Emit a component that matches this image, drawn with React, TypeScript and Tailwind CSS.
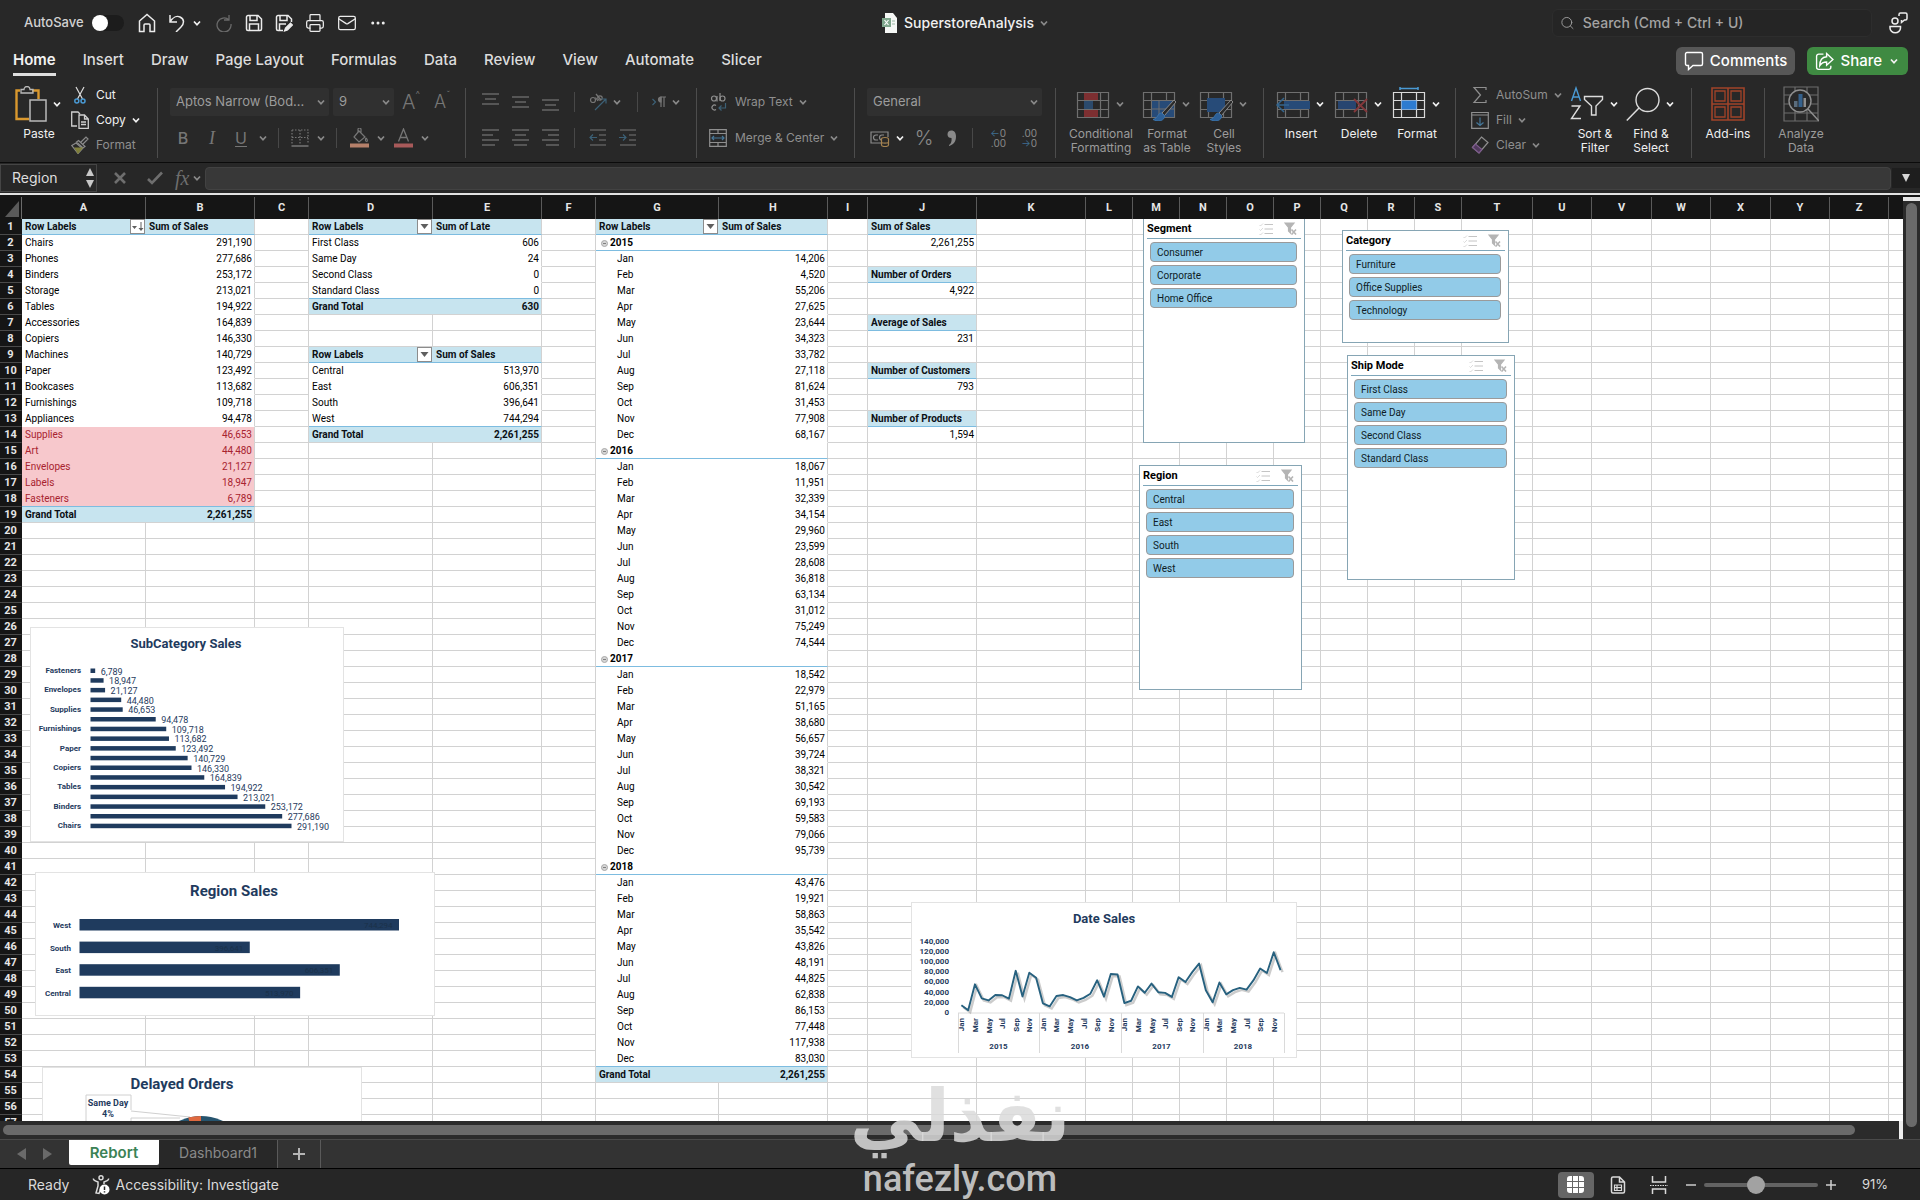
import { useState } from "react";
import type { ReactNode } from "react";
import { Home, Mail, MoreHorizontal, Printer, Search } from "lucide-react";

type CellKind = "text" | "num" | "head" | "total" | "totalNum" | "bad" | "badNum" | "year" | "month";

type Cell = {
  value: string;
  kind: CellKind;
  filter?: "arrow" | "sorted";
};

const columns = [
  { name: "A", width: "w-[124px]" },
  { name: "B", width: "w-[109px]" },
  { name: "C", width: "w-[54px]" },
  { name: "D", width: "w-[124px]" },
  { name: "E", width: "w-[109px]" },
  { name: "F", width: "w-[54px]" },
  { name: "G", width: "w-[123px]" },
  { name: "H", width: "w-[109px]" },
  { name: "I", width: "w-[40px]" },
  { name: "J", width: "w-[109px]" },
  { name: "K", width: "w-[109px]" },
  { name: "L", width: "w-[47px]" },
  { name: "M", width: "w-[47px]" },
  { name: "N", width: "w-[47px]" },
  { name: "O", width: "w-[47px]" },
  { name: "P", width: "w-[47px]" },
  { name: "Q", width: "w-[47px]" },
  { name: "R", width: "w-[47px]" },
  { name: "S", width: "w-[47px]" },
  { name: "T", width: "w-[71px]" },
  { name: "U", width: "w-[59px]" },
  { name: "V", width: "w-[60px]" },
  { name: "W", width: "w-[59px]" },
  { name: "X", width: "w-[60px]" },
  { name: "Y", width: "w-[59px]" },
  { name: "Z", width: "w-[59px]" },
  { name: "", width: "w-auto" },
];

const subCategories: [string, number][] = [
  ["Chairs", 291190],
  ["Phones", 277686],
  ["Binders", 253172],
  ["Storage", 213021],
  ["Tables", 194922],
  ["Accessories", 164839],
  ["Copiers", 146330],
  ["Machines", 140729],
  ["Paper", 123492],
  ["Bookcases", 113682],
  ["Furnishings", 109718],
  ["Appliances", 94478],
  ["Supplies", 46653],
  ["Art", 44480],
  ["Envelopes", 21127],
  ["Labels", 18947],
  ["Fasteners", 6789],
];

const lateOrders: [string, number][] = [
  ["First Class", 606],
  ["Same Day", 24],
  ["Second Class", 0],
  ["Standard Class", 0],
];

const regions: [string, number][] = [
  ["Central", 513970],
  ["East", 606351],
  ["South", 396641],
  ["West", 744294],
];

const months = ["Jan", "Feb", "Mar", "Apr", "May", "Jun", "Jul", "Aug", "Sep", "Oct", "Nov", "Dec"];

const years: { year: string; sales: number[] }[] = [
  { year: "2015", sales: [14206, 4520, 55206, 27625, 23644, 34323, 33782, 27118, 81624, 31453, 77908, 68167] },
  { year: "2016", sales: [18067, 11951, 32339, 34154, 29960, 23599, 28608, 36818, 63134, 31012, 75249, 74544] },
  { year: "2017", sales: [18542, 22979, 51165, 38680, 56657, 39724, 38321, 30542, 69193, 59583, 79066, 95739] },
  { year: "2018", sales: [43476, 19921, 58863, 35542, 43826, 48191, 44825, 62838, 86153, 77448, 117938, 83030] },
];

const measures: [string, number][] = [
  ["Sum of Sales", 2261255],
  ["Number of Orders", 4922],
  ["Average of Sales", 231],
  ["Number of Customers", 793],
  ["Number of Products", 1594],
];

const fmt = (n: number) => n.toLocaleString("en-US");

const cells: Record<string, Cell> = {};
const noRight = new Set<string>();
const noBottom = new Set<string>();
const blueBottom = new Set<string>();

function pivotArea(left: string, right: string, from: number, to: number) {
  for (let r = from; r <= to; r++) {
    noRight.add(left + r);
    if (r < to) {
      noBottom.add(left + r);
      noBottom.add(right + r);
    }
  }
  [from, to - 1].forEach((r) => {
    blueBottom.add(left + r);
    blueBottom.add(right + r);
  });
}

function pivot(
  left: string,
  right: string,
  start: number,
  valueTitle: string,
  rows: [string, number][],
  total: number,
  filter: "arrow" | "sorted",
  isBad: (n: number) => boolean = () => false
) {
  const end = start + rows.length + 1;
  cells[left + start] = { value: "Row Labels", kind: "head", filter };
  cells[right + start] = { value: valueTitle, kind: "head" };
  rows.forEach(([label, n], i) => {
    const bad = isBad(n);
    cells[left + (start + 1 + i)] = { value: label, kind: bad ? "bad" : "text" };
    cells[right + (start + 1 + i)] = { value: fmt(n), kind: bad ? "badNum" : "num" };
  });
  cells[left + end] = { value: "Grand Total", kind: "total" };
  cells[right + end] = { value: fmt(total), kind: "totalNum" };
  pivotArea(left, right, start, end);
}

pivot("A", "B", 1, "Sum of Sales", subCategories, 2261255, "sorted", (n) => n < 50000);
pivot("D", "E", 1, "Sum of Late", lateOrders, 630, "arrow");
pivot("D", "E", 9, "Sum of Sales", regions, 2261255, "arrow");

cells.G1 = { value: "Row Labels", kind: "head", filter: "arrow" };
cells.H1 = { value: "Sum of Sales", kind: "head" };
years.forEach(({ year, sales }, y) => {
  const top = 2 + y * 13;
  cells["G" + top] = { value: year, kind: "year" };
  blueBottom.add("G" + top);
  blueBottom.add("H" + top);
  sales.forEach((n, m) => {
    cells["G" + (top + 1 + m)] = { value: months[m], kind: "month" };
    cells["H" + (top + 1 + m)] = { value: fmt(n), kind: "num" };
  });
});
cells.G54 = { value: "Grand Total", kind: "total" };
cells.H54 = { value: "2,261,255", kind: "totalNum" };
pivotArea("G", "H", 1, 54);

measures.forEach(([label, n], i) => {
  cells["J" + (1 + i * 3)] = { value: label, kind: "head" };
  cells["J" + (2 + i * 3)] = { value: fmt(n), kind: "num" };
  blueBottom.add("J" + (1 + i * 3));
});

const kindClass: Record<CellKind, string> = {
  text: "bg-white text-black",
  num: "bg-white text-right text-black",
  head: "bg-[#c7e4ef] font-bold text-[#0b0f14]",
  total: "bg-[#c7e4ef] font-bold text-[#0b0f14]",
  totalNum: "bg-[#c7e4ef] text-right font-bold text-[#0b0f14]",
  bad: "bg-[#f7c8cc] text-[#a8232f]",
  badNum: "bg-[#f7c8cc] text-right text-[#a8232f]",
  year: "bg-white font-bold text-black",
  month: "bg-white pl-[21px] text-black",
};

/* ---------- small pieces ---------- */

function Chevron({ dim = false }: { dim?: boolean }) {
  return (
    <svg viewBox="0 0 12 12" className={`size-3 shrink-0 ${dim ? "text-[#8a8a8a]" : "text-[#f2f2f2]"}`}>
      <path d="M3 4.500 6 7.800 9 4.500" fill="none" stroke="currentColor" strokeWidth="1.700" />
    </svg>
  );
}

function Glyph({
  box = "0 0 18 18",
  size = "size-[18px]",
  children,
}: {
  box?: string;
  size?: string;
  children: ReactNode;
}) {
  return (
    <svg viewBox={box} className={`${size} shrink-0`} fill="none" stroke="currentColor" strokeWidth="1.200">
      {children}
    </svg>
  );
}

const GroupLine = () => <div className="mt-3 h-[70px] w-px shrink-0 bg-[#4d4d4d]" />;
const ShortLine = () => <div className="mx-0.5 h-5 w-px shrink-0 bg-[#484848]" />;

function SmallButton({
  icon,
  label,
  arrow = false,
  dim = false,
}: {
  icon: ReactNode;
  label: string;
  arrow?: boolean;
  dim?: boolean;
}) {
  return (
    <button className={`flex h-[25px] items-center text-xs ${dim ? "text-[#8f8f8f]" : "text-[#f0f0f0]"}`}>
      <span className="mr-[7px] flex w-[18px] justify-center">{icon}</span>
      {label}
      {arrow && (
        <span className="ml-1">
          <Chevron dim={dim} />
        </span>
      )}
    </button>
  );
}

function BigButton({
  icon,
  label,
  width,
  arrow = true,
  dim = false,
  dimArrow = false,
}: {
  icon: ReactNode;
  label: string;
  width: string;
  arrow?: boolean;
  dim?: boolean;
  dimArrow?: boolean;
}) {
  return (
    <button className={`flex ${width} shrink-0 flex-col items-center pt-[10px]`}>
      <span className="flex h-9 items-center gap-1">
        {icon}
        {arrow && <Chevron dim={dimArrow} />}
      </span>
      <span
        className={`mt-[5px] text-center text-xs leading-[14px] whitespace-pre ${
          dim ? "text-[#9b9b9b]" : "text-[#f0f0f0]"
        }`}
      >
        {label}
      </span>
    </button>
  );
}

function RibbonSelect({ label, value, width }: { label: string; value: string; width: string }) {
  return (
    <div className={`relative h-7 ${width} shrink-0 rounded-xs bg-[#303030]`}>
      <select
        aria-label={label}
        className="size-full appearance-none truncate bg-transparent pr-5 pl-1.5 text-[13px] text-[#9c9c9c] outline-none"
      >
        <option>{value}</option>
      </select>
      <span className="pointer-events-none absolute top-2 right-0.5">
        <Chevron dim />
      </span>
    </div>
  );
}

/* ---------- title bar ---------- */

function TitleBar() {
  const [autoSave, setAutoSave] = useState(false);
  return (
    <div className="flex h-[46px] shrink-0 items-center text-[#ececec]">
      <div className="flex flex-1 items-center pl-6">
        <label htmlFor="autosave" className="text-[13px] font-medium text-[#d2d2d2]">
          AutoSave
        </label>
        <span className="relative ml-2 flex h-4 w-8 items-center">
          <input
            id="autosave"
            type="checkbox"
            checked={autoSave}
            onChange={(e) => setAutoSave(e.target.checked)}
            className="peer h-4 w-8 appearance-none rounded-full bg-[#1c1c1c]"
          />
          <span className="pointer-events-none absolute left-0 size-4 rounded-full bg-white peer-checked:left-4" />
        </span>
        <div className="ml-3.5 flex items-center gap-3">
          <button aria-label="Home">
            <svg viewBox="0 0 18 20" className="h-5 w-[18px]" fill="none" stroke="currentColor" strokeWidth="1.500">
              <path d="M1.500 8 9 1.500 16.500 8v10.500H12V12a1 1 0 0 0-1-1H7a1 1 0 0 0-1 1v6.500H1.500z" />
            </svg>
          </button>
          <button aria-label="Undo" className="flex items-center gap-[5px]">
            <Glyph>
              <path d="M2 1v7h7M2 8c3-5 7-6.500 10-5 5 2.500 4 7 1 10l-5 5" strokeWidth="1.500" />
            </Glyph>
            <Chevron />
          </button>
          <button aria-label="Redo" className="text-[#6a6a6a]">
            <Glyph>
              <path d="M14 1v5H9M14 6A7 7 0 1 0 16 10" strokeWidth="1.300" />
            </Glyph>
          </button>
          <button aria-label="Save">
            <Glyph>
              <path d="M3 1.500h10l3.500 3.500v10a1.500 1.500 0 0 1-1.500 1.500H3A1.500 1.500 0 0 1 1.500 15V3A1.500 1.500 0 0 1 3 1.500Z" strokeWidth="1.500" />
              <path d="M5 2v4.500h7V2M4.500 16V10h9v6" strokeWidth="1.500" />
            </Glyph>
          </button>
          <button aria-label="Save as">
            <Glyph>
              <path d="M8 16.500H3A1.500 1.500 0 0 1 1.500 15V3A1.500 1.500 0 0 1 3 1.500h10l3.500 3.500v3" strokeWidth="1.500" />
              <path d="M5 2v4.500h7V2M4.500 16V10H11" strokeWidth="1.500" />
              <path d="m9.500 17 1-3 5-5 2 2-5 5z" fill="currentColor" />
            </Glyph>
          </button>
          <button aria-label="Print">
            <Printer className="size-5" strokeWidth={1.5} />
          </button>
          <button aria-label="Mail">
            <Mail className="size-5" strokeWidth={1.5} />
          </button>
          <button aria-label="More">
            <MoreHorizontal className="size-[18px]" strokeWidth={2} />
          </button>
        </div>
      </div>
      <div className="flex items-center text-sm font-medium text-[#f0f0f0]">
        <svg viewBox="0 0 16 20" className="mr-1.5 h-5 w-4">
          <path d="M3 0h8l4 5v15H3z" fill="#f6f8f6" />
          <rect x="0" y="5" width="9" height="9" fill="#7fa78d" />
          <path d="m2.500 7 4 5m0-5-4 5" stroke="#fff" strokeWidth="1.200" />
          <path d="M10 8h3M10 11h3" stroke="#9ab8a4" />
        </svg>
        SuperstoreAnalysis
        <span className="ml-1">
          <Chevron dim />
        </span>
      </div>
      <div className="flex flex-1 items-center justify-end pr-3">
        <div className="flex h-7 w-80 items-center rounded-md border border-[#2d2d2d] bg-[#252525] pl-[7px]">
          <Search className="size-4 text-[#a0a0a0]" strokeWidth={1.5} />
          <input
            aria-label="Search"
            placeholder="Search (Cmd + Ctrl + U)"
            className="ml-2 w-full bg-transparent text-sm font-medium outline-none placeholder:text-[#a3a3a3]"
          />
        </div>
        <button aria-label="Presence" className="ml-4">
          <Glyph box="0 0 20 22" size="h-[22px] w-5">
            <circle cx="7" cy="9" r="3" strokeWidth="1.500" />
            <path d="M2 14.500h10.500v1.500a5 4.500 0 0 1-10.500 0z" strokeWidth="1.500" />
            <path d="M11 4V2.500A1.500 1.500 0 0 1 12.500 1h5A1.500 1.500 0 0 1 19 2.500v4A1.500 1.500 0 0 1 17.500 8h-1L13.500 10.500V8" strokeWidth="1.500" />
          </Glyph>
        </button>
      </div>
    </div>
  );
}

const ribbonTabs = ["Home", "Insert", "Draw", "Page Layout", "Formulas", "Data", "Review", "View", "Automate", "Slicer"];

function RibbonTabs() {
  return (
    <div className="flex h-[30px] shrink-0 items-center justify-between pr-3 pl-[13px]">
      <nav className="flex gap-[27px] self-stretch">
        {ribbonTabs.map((tab, i) => (
          <a
            key={tab}
            href="#"
            className={`h-[30px] border-b-[3px] text-[15px] leading-7 ${
              i === 0 ? "border-[#dedede] font-semibold text-[#f2f2f2]" : "border-transparent font-medium text-[#dcdcdc]"
            }`}
          >
            {tab}
          </a>
        ))}
      </nav>
      <div className="flex gap-3 text-[15px] font-medium text-white">
        <button className="flex h-7 items-center gap-1.5 rounded-md bg-[#575757] px-2">
          <Glyph box="0 0 20 20" size="size-5">
            <path d="M3 1.500h14A1.500 1.500 0 0 1 18.500 3v10a1.500 1.500 0 0 1-1.500 1.500H9L4.500 18.500v-4H3A1.500 1.500 0 0 1 1.500 13V3A1.500 1.500 0 0 1 3 1.500Z" strokeWidth="1.400" />
          </Glyph>
          Comments
        </button>
        <button className="flex h-7 items-center gap-1.5 rounded-md bg-[#3f8a42] px-2">
          <Glyph size="size-[19px]">
            <path d="M8 2H3.500A2 2 0 0 0 1.500 4v10.500a2 2 0 0 0 2 2H13a2 2 0 0 0 2-2V13" strokeWidth="1.300" />
            <path d="M11 1.500 17 7l-6 5.500V9.500C8 9.500 6 10.500 4.500 13 4.500 8 7 4.800 11 4.500z" strokeWidth="1.300" />
          </Glyph>
          Share
          <Chevron />
        </button>
      </div>
    </div>
  );
}

/* ---------- ribbon icons ---------- */

function Lines({ rows }: { rows: [number, number, number][] }) {
  return (
    <Glyph>
      {rows.map(([x1, x2, y]) => (
        <path key={y} d={`M${x1} ${y}H${x2}`} />
      ))}
    </Glyph>
  );
}

function GridIcon({ children, dim = true }: { children?: ReactNode; dim?: boolean }) {
  return (
    <svg
      viewBox="0 0 34 34"
      className={`size-[34px] shrink-0 ${dim ? "text-[#6f6f6f]" : "text-[#dadada]"}`}
      fill="none"
      stroke="currentColor"
    >
      <path d="M1.500 5.500h31v25h-31zM1.500 13.500h31M1.500 22.500h31M9.500 5.500v25M24.500 5.500v25" strokeWidth="1.200" />
      {children}
    </svg>
  );
}

function Brush() {
  return (
    <>
      <path d="M32 13 20 26l2.500 2.500L34 15z" fill="#2a2a2a" stroke="#8a8a8a" />
      <path d="M19.500 26c-4 0-3 5-8.500 6.500 5 2.500 12 1.500 11.500-4z" fill="#2d5f96" stroke="#3a74ad" />
    </>
  );
}

function Ribbon() {
  return (
    <div className="flex h-[87px] shrink-0 overflow-hidden border-b border-[#0b0b0b]">
      <div className="flex w-[157px] shrink-0 gap-1.5 pl-[13px]">
        <BigButton
          width="w-[52px]"
          label="Paste"
          icon={
            <Glyph box="0 0 32 36" size="h-9 w-8">
              <path d="M5 4.500H1.500V33H14M17 4.500h6.500V13" stroke="#d9982e" strokeWidth="2.400" />
              <path d="M6 7V3.500h3a3 3 0 0 1 6 0h3V7z" stroke="#b9b9b9" strokeWidth="1.300" />
              <rect x="15" y="14" width="16" height="21" stroke="#b9b9b9" strokeWidth="1.500" />
            </Glyph>
          }
        />
        <div className="flex flex-col items-start pt-1.5">
          <SmallButton
            label="Cut"
            icon={
              <Glyph>
                <path d="m5 1 6.500 12M13 1 6.500 13" stroke="#dcdcdc" />
                <circle cx="5.800" cy="15" r="2" stroke="#4a9ad4" strokeWidth="1.500" />
                <circle cx="12" cy="15" r="2" stroke="#4a9ad4" strokeWidth="1.500" />
              </Glyph>
            }
          />
          <SmallButton
            label="Copy"
            arrow
            icon={
              <Glyph>
                <path d="M6 15H.700V1H7l2 2" stroke="#cfcfcf" strokeWidth="1.300" />
                <path d="M8 4h5.500l3.800 4v9.300H8zM13.500 4v4h3.800M10 11h5M10 13.500h5" stroke="#cfcfcf" strokeWidth="1.300" />
              </Glyph>
            }
          />
          <SmallButton
            label="Format"
            dim
            icon={
              <Glyph>
                <path d="m10 6 5-5 2 2-5 5M7.500 4.500l6.500 6L12 12 5.500 6z" stroke="#8a8a8a" />
                <path d="M5 7 .800 9.500 7 17.500l4.500-5z" stroke="#8a8a8a" />
                <path d="m4 12 3 5 4-5z" fill="#80803c" stroke="#80803c" />
              </Glyph>
            }
          />
        </div>
      </div>
      <GroupLine />

      <div className="flex w-[307px] shrink-0 flex-col gap-2 pt-3 pl-3 text-[#767676]">
        <div className="flex h-7 items-center gap-1">
          <RibbonSelect label="Font" value="Aptos Narrow (Bod..." width="w-[159px]" />
          <RibbonSelect label="Font size" value="9" width="w-[61px]" />
          <button aria-label="Increase font size" className="ml-1 flex w-6 text-xl leading-7 font-light">
            A<span className="text-[10px] leading-3">^</span>
          </button>
          <button aria-label="Decrease font size" className="ml-1 flex w-6 text-lg leading-7 font-light">
            A<span className="text-[10px] leading-3">ˇ</span>
          </button>
        </div>
        <div className="flex h-7 items-center gap-[3px]">
          <button className="w-[26px] text-base font-medium">B</button>
          <button className="w-[26px] font-['Liberation_Serif',serif] text-lg italic">I</button>
          <button className="w-[26px] text-base underline underline-offset-2">U</button>
          <Chevron dim />
          <span className="px-1">
            <ShortLine />
          </span>
          <button aria-label="Borders" className="flex w-6 justify-center">
            <Glyph>
              <path d="M1 1h16v14M1 1v14M9 1v14M1 8.500h16" strokeDasharray="1.500 1.500" />
              <path d="M.500 17h17" strokeWidth="1.500" />
            </Glyph>
          </button>
          <Chevron dim />
          <span className="px-1">
            <ShortLine />
          </span>
          <button aria-label="Fill colour" className="flex w-[26px] justify-center">
            <Glyph box="0 0 19 20" size="h-5 w-[19px]">
              <path d="m9 3 6 6-6 5-5-5zM8 5V1.500a1.500 1.500 0 0 1 3 0V5M16 10c2 2 1.500 3.500.500 3.500S15 12 16 10" />
              <path d="M0 17.500h19" stroke="#b5806a" strokeWidth="4" />
            </Glyph>
          </button>
          <Chevron dim />
          <button aria-label="Font colour" className="flex w-[26px] justify-center">
            <Glyph box="0 0 19 20" size="h-5 w-[19px]">
              <path d="M4.500 13.500 9.500 1l5 12.500M6.300 9.500h6.500" strokeWidth="1.300" />
              <path d="M0 17.500h19" stroke="#a85a5a" strokeWidth="4" />
            </Glyph>
          </button>
          <Chevron dim />
        </div>
      </div>
      <GroupLine />

      <div className="flex w-[230px] shrink-0 flex-col gap-2 pt-3 pl-4 text-[#767676]">
        <div className="flex h-7 items-center gap-3">
          <button aria-label="Top align">
            <Lines rows={[[0, 17, 1], [3, 14, 6], [0, 17, 11]]} />
          </button>
          <button aria-label="Middle align">
            <Lines rows={[[0, 17, 4], [3, 14, 9], [0, 17, 14]]} />
          </button>
          <button aria-label="Bottom align">
            <Lines rows={[[0, 17, 7], [3, 14, 12], [0, 17, 17]]} />
          </button>
          <ShortLine />
          <button aria-label="Orientation" className="flex items-center gap-1">
            <Glyph>
              <circle cx="4" cy="7" r="2.500" />
              <path d="M6.500 4.500 9 8M7 1l5 6" />
              <circle cx="11" cy="5" r="2.200" />
              <path d="M6 17 17 6M12.500 6H17v4.500" stroke="#3c6076" />
            </Glyph>
            <Chevron dim />
          </button>
          <ShortLine />
          <button aria-label="Text direction" className="flex items-center gap-1">
            <Glyph box="0 0 14 14" size="size-3.5">
              <path d="m.500 4 3 3-3 3" stroke="#3c6076" />
              <path d="M9 12V2h5M12 2v10" />
              <path d="M9 2a2.500 2.500 0 0 0 0 5z" fill="currentColor" />
            </Glyph>
            <Chevron dim />
          </button>
        </div>
        <div className="flex h-7 items-center gap-3">
          <button aria-label="Align left">
            <Lines rows={[[0, 17, 1], [0, 11, 6], [0, 17, 11], [0, 13, 16]]} />
          </button>
          <button aria-label="Centre">
            <Lines rows={[[0, 17, 1], [3, 14, 6], [0, 17, 11], [2, 15, 16]]} />
          </button>
          <button aria-label="Align right">
            <Lines rows={[[0, 17, 1], [6, 17, 6], [0, 17, 11], [4, 17, 16]]} />
          </button>
          <ShortLine />
          <button aria-label="Decrease indent">
            <Glyph>
              <path d="M1 1h16M10 6h7M10 11h7M1 16h16" />
              <path d="M8 8.500H1m3-3-3 3 3 3" stroke="#3c6076" />
            </Glyph>
          </button>
          <button aria-label="Increase indent">
            <Glyph>
              <path d="M1 1h16M10 6h7M10 11h7M1 16h16" />
              <path d="M0 8.500h7m-3-3 3 3-3 3" stroke="#3c6076" />
            </Glyph>
          </button>
        </div>
      </div>
      <GroupLine />

      <div className="flex w-[157px] shrink-0 flex-col gap-2 pt-3 pl-3 text-[#8f8f8f]">
        <button className="flex h-7 items-center gap-2">
          <Glyph>
            <circle cx="5" cy="5.500" r="2.500" />
            <path d="M8 3v5.500M11 0v8M7 12.500a2.500 2.500 0 1 0 0 4" />
            <circle cx="13.500" cy="5.500" r="2.500" />
            <path d="M16.500 10v5H10m2.500-2.500L10 15l2.500 2.500" stroke="#3c6076" />
          </Glyph>
          <span className="flex items-center gap-1 text-xs">
            Wrap Text <Chevron dim />
          </span>
        </button>
        <button className="flex h-7 items-center gap-2">
          <Glyph>
            <path d="M.700.700h16.600v16.600H.700zM.700 4.500h16.600M.700 13.500h16.600M9 .700v3.800M9 13.500v3.800" />
            <path d="M3 9h12M5 7 3 9l2 2M13 7l2 2-2 2" stroke="#46789a" />
          </Glyph>
          <span className="flex items-center gap-1 text-xs">
            Merge &amp; Center <Chevron dim />
          </span>
        </button>
      </div>
      <GroupLine />

      <div className="flex w-[200px] shrink-0 flex-col gap-2 pt-3 pl-3 text-[#8a8a8a]">
        <RibbonSelect label="Number format" value="General" width="w-[175px]" />
        <div className="flex h-7 items-center pl-[3px]">
          <button aria-label="Currency" className="flex items-center gap-1">
            <Glyph box="0 0 20 18" size="h-[18px] w-5">
              <path d="M11 14H1V3h17v5M8 6H6a2 2 0 0 0 0 5h2M14 6h-2a2 2 0 0 0 0 5" />
              <path d="M11.500 10c0-2 7-2 7 0v6c0 2-7 2-7 0zM11.500 13c0 1.500 7 1.500 7 0" stroke="#a58350" />
            </Glyph>
            <Chevron />
          </button>
          <button className="ml-2 w-5 text-xl leading-7 font-light">%</button>
          <button aria-label="Comma style" className="ml-3">
            <Glyph box="0 0 12 18" size="h-[18px] w-3">
              <path d="M3 17c4-1 7-4 7-9.500C10 3.500 8 1.500 5.500 1.500S1.500 3 1.500 5.500 3.300 9 5.500 9C6 12 5 15 3 16z" fill="currentColor" stroke="none" />
            </Glyph>
          </button>
          <span className="mx-3">
            <ShortLine />
          </span>
          <button aria-label="Increase decimal" className="w-[19px] text-right text-[10px] leading-[10px]">
            <span className="text-[#3f6f92]">←</span>0<br />
            .00
          </button>
          <button aria-label="Decrease decimal" className="ml-3 w-[19px] text-right text-[10px] leading-[10px]">
            .00
            <br />
            <span className="text-[#3f6f92]">→</span>0
          </button>
        </div>
      </div>
      <GroupLine />

      <div className="flex w-[207px] shrink-0 gap-1 pl-3">
        <BigButton
          dim
          dimArrow
          width="w-[66px]"
          label={"Conditional\nFormatting"}
          icon={
            <GridIcon>
              <path d="M8 6h14v7H8zM8 23h14v7H8z" fill="#7d2f31" stroke="none" />
              <path d="M8 14h9v8H8z" fill="#2b4a6c" stroke="none" />
            </GridIcon>
          }
        />
        <BigButton
          dim
          dimArrow
          width="w-[58px]"
          label={"Format\nas Table"}
          icon={
            <GridIcon>
              <path d="M10 14h22v16H10z" fill="#274b78" stroke="none" />
              <path d="M17 14v16M10 22h22" />
              <Brush />
            </GridIcon>
          }
        />
        <BigButton
          dim
          dimArrow
          width="w-12"
          label={"Cell\nStyles"}
          icon={
            <GridIcon>
              <path d="M8 11h18v14H8z" fill="#274b78" stroke="none" />
              <Brush />
            </GridIcon>
          }
        />
      </div>
      <GroupLine />

      <div className="flex w-[191px] shrink-0 gap-1 pl-2.5">
        <BigButton
          width="w-[54px]"
          label="Insert"
          icon={
            <GridIcon>
              <path d="M8 14h26v8H8z" fill="#274b78" stroke="none" />
              <path d="M1 18h12M8 11l-7 7 7 7" stroke="#34668f" strokeWidth="1.500" />
            </GridIcon>
          }
        />
        <BigButton
          width="w-[54px]"
          label="Delete"
          icon={
            <GridIcon>
              <path d="M4 14h18v8H4z" fill="#274570" stroke="none" />
              <path d="m20 12 13 13M33 12 20 25" stroke="#84383b" strokeWidth="1.800" />
            </GridIcon>
          }
        />
        <BigButton
          width="w-[54px]"
          label="Format"
          icon={
            <GridIcon dim={false}>
              <path d="M9.500 13.500h15v9h-15z" fill="#2d7bd0" stroke="none" />
              <path d="M8 1.500h18M8 0v3M26 0v3" stroke="#4a9ad4" strokeWidth="1.500" />
            </GridIcon>
          }
        />
      </div>
      <GroupLine />

      <div className="flex w-[235px] shrink-0 pl-[15px]">
        <div className="flex w-24 shrink-0 flex-col items-start pt-1.5">
          <SmallButton
            label="AutoSum"
            arrow
            dim
            icon={
              <Glyph>
                <path d="M15 4V1.500H3L9.500 9 3 16.500h12V14" />
              </Glyph>
            }
          />
          <SmallButton
            label="Fill"
            arrow
            dim
            icon={
              <Glyph>
                <path d="M.700 1.500h16.600v15.800H.700zM.700 4h16.600" />
                <path d="M9 6.500v8M5.500 11.500l3.500 3 3.500-3" stroke="#46789a" />
              </Glyph>
            }
          />
          <SmallButton
            label="Clear"
            arrow
            dim
            icon={
              <Glyph>
                <path d="M10.500 1 17 6.500 8 17 1.500 11.500z" />
                <path d="m4.500 8-3 3.500L8 17l3-3.500z" fill="#503a5c" stroke="#7d5a8c" />
              </Glyph>
            }
          />
        </div>
        <BigButton
          width="w-14"
          label={"Sort &\nFilter"}
          icon={
            <Glyph box="0 0 34 36" size="h-9 w-[34px]">
              <path d="M1.500 15 6 2l4.500 13M3 11h6" stroke="#4a9ad4" strokeWidth="1.400" />
              <path d="M1.500 20h8.500L1.500 32.500H11" stroke="#dcdcdc" strokeWidth="1.400" />
              <path d="M14.500 10.500h18v3L26 20v9h-4.500v-9l-7-6.500z" stroke="#dcdcdc" strokeWidth="1.400" />
            </Glyph>
          }
        />
        <BigButton
          width="w-14"
          label={"Find &\nSelect"}
          icon={
            <Glyph box="0 0 34 36" size="h-9 w-[34px]">
              <circle cx="21.500" cy="14" r="11.500" stroke="#dcdcdc" strokeWidth="1.400" />
              <path d="M13 22 .800 34.500" stroke="#dcdcdc" strokeWidth="1.500" />
            </Glyph>
          }
        />
      </div>
      <GroupLine />

      <BigButton
        width="w-[72px]"
        label="Add-ins"
        arrow={false}
        icon={
          <Glyph box="0 0 34 34" size="size-[34px]">
            <path d="M1 1h32v32H1zM17 1v32M1 17h32" stroke="#a04328" strokeWidth="1.600" />
            <path d="M4 4h10v10H4zM20 4h10v10H20zM4 20h10v10H4zM20 20h10v10H20z" stroke="#a04328" strokeWidth="1.300" />
          </Glyph>
        }
      />
      <GroupLine />

      <BigButton
        width="w-[72px]"
        label={"Analyze\nData"}
        arrow={false}
        dim
        icon={
          <Glyph box="0 0 36 36" size="size-9">
            <path d="M1 1h34v34H1zM1 9h34M1 18h34M1 27h34M12 1v34M24 1v34" stroke="#6c6c6c" />
            <circle cx="17" cy="15" r="11" fill="#282828" stroke="#8f8f8f" strokeWidth="1.400" />
            <path d="M11 15h3.500v6H11z" fill="#5a6c7c" stroke="none" />
            <path d="M15.500 8h4v13h-4z" fill="#35618c" stroke="none" />
            <path d="M20.500 12H23v9h-2.500z" fill="#8f8f8f" stroke="none" />
            <path d="m25 23 11 12" stroke="#8f8f8f" strokeWidth="1.500" />
          </Glyph>
        }
      />
    </div>
  );
}

/* ---------- formula bar ---------- */

function FormulaBar() {
  return (
    <div className="flex h-[30px] shrink-0 items-center bg-[#272727] text-[#6e6e6e]">
      <div className="flex h-7 w-[97px] items-center justify-between border border-[#454545] pr-0.5 pl-[11px]">
        <input aria-label="Name box" defaultValue="Region" className="w-16 bg-transparent text-sm text-[#dedede] outline-none" />
        <svg viewBox="0 0 8 20" className="h-5 w-2 text-[#c8c8c8]" fill="currentColor">
          <path d="M4 0 8 8H0zM4 20 0 12h8z" />
        </svg>
      </div>
      <button aria-label="Cancel" className="ml-4">
        <Glyph box="0 0 14 14" size="size-3.5">
          <path d="m2 2 10 10M12 2 2 12" strokeWidth="2.600" />
        </Glyph>
      </button>
      <button aria-label="Enter" className="ml-5">
        <Glyph box="0 0 16 14" size="h-3.5 w-4">
          <path d="m1 8 4 4L15 1.500" strokeWidth="2.600" />
        </Glyph>
      </button>
      <button aria-label="Insert function" className="ml-3 flex items-center gap-0.5 font-['Liberation_Serif',serif] text-xl italic">
        fx
        <Chevron dim />
      </button>
      <input
        aria-label="Formula"
        className="ml-0.5 h-[23px] min-w-0 flex-1 rounded-sm border border-[#424242] bg-[#383838] px-2 text-sm text-white outline-none"
      />
      <button aria-label="Expand formula bar" className="ml-px flex h-5 w-7 items-center justify-center bg-[#1e1e1e]">
        <svg viewBox="0 0 8 8" className="size-2 fill-[#d6d6d6]">
          <path d="M0 0h8L4 8z" />
        </svg>
      </button>
    </div>
  );
}

/* ---------- grid ---------- */

function FilterButton({ sorted }: { sorted: boolean }) {
  return (
    <button
      aria-label="Filter"
      className="flex size-[15px] items-center justify-center border border-[#8c8c8c] bg-white text-[#5f5f5f]"
    >
      <svg viewBox="0 0 13 13" className="size-[13px]" fill="currentColor">
        {sorted ? <path d="M1 6h5L3.500 9zM9.500 2h1v6h2L10 11 7.500 8h2z" /> : <path d="M2.500 4h8l-4 5z" />}
      </svg>
    </button>
  );
}

function GridCell({ id, last }: { id: string; last: boolean }) {
  const cell = cells[id];
  const right = last || noRight.has(id) ? "" : "border-r border-r-[#d2d2d2]";
  const bottom = blueBottom.has(id)
    ? "border-b-[#7dbce0]"
    : noBottom.has(id)
      ? "border-b-transparent"
      : "border-b-[#d2d2d2]";
  const pad = cell?.kind === "month" ? "pt-px" : cell?.filter ? "pr-px pl-[3px]" : "pt-px pr-0.5 pl-[3px]";
  return (
    <td
      className={`h-4 overflow-hidden border-b p-0 ${pad} ${right} ${bottom} ${cell ? kindClass[cell.kind] : "bg-white"}`}
    >
      {cell?.filter ? (
        <div className="flex h-[15px] items-center justify-between">
          <span className="pt-px">{cell.value}</span>
          <FilterButton sorted={cell.filter === "sorted"} />
        </div>
      ) : cell?.kind === "year" ? (
        <div className="flex items-center gap-0.5 pl-0.5">
          <svg viewBox="0 0 7 7" className="size-[7px]">
            <circle cx="3.500" cy="3.500" r="3" fill="#d5d5d5" stroke="#a9a9a9" />
            <path d="M2 3.500h3" stroke="#808080" />
          </svg>
          {cell.value}
        </div>
      ) : (
        cell?.value
      )}
    </td>
  );
}

const rowNumbers = Array.from({ length: 57 }, (_, i) => i + 1);

function Grid() {
  return (
    <table className="w-full table-fixed border-separate border-spacing-0 text-[10px] leading-[14px] whitespace-nowrap">
      <colgroup>
        <col className="w-[22px]" />
        {columns.map((c) => (
          <col key={c.name} className={c.width} />
        ))}
      </colgroup>
      <thead>
        <tr>
          <th className="h-[22px] border-r border-[#6a6a6a] bg-[#151515] p-0">
            <svg viewBox="0 0 21 22" className="h-[22px] w-[21px]">
              <path d="M19 4v16H5z" fill="#5a5a5a" />
            </svg>
          </th>
          {columns.map((c) => (
            <th key={c.name} className="h-[22px] border-r border-[#5a5a5a] bg-[#151515] p-0 text-[11px] font-bold text-[#e6e6e6] last:border-r-0">
              {c.name}
            </th>
          ))}
        </tr>
      </thead>
      <tbody>
        {rowNumbers.map((r) => (
          <tr key={r}>
            <th className="h-4 border-r border-b border-r-[#151515] border-b-[#4a4a4a] bg-[#151515] p-0 pt-px text-[11px] font-bold text-[#e6e6e6]">
              {r}
            </th>
            {columns.map((c, i) => (
              <GridCell key={c.name} id={c.name + r} last={i === columns.length - 1} />
            ))}
          </tr>
        ))}
      </tbody>
    </table>
  );
}

/* ---------- objects floating on the sheet ---------- */

function Slicer({ title, items, place }: { title: string; items: string[]; place: string }) {
  return (
    <section className={`absolute ${place} border border-[#86a5b4] bg-white px-[3px] text-[10px]`}>
      <div className="flex h-5 items-center border-b border-[#7ea6ba]">
        <h3 className="flex-1 pt-px text-[11px] font-bold text-black">{title}</h3>
        <button aria-label="Multi-select" className="mr-[11px] text-[#c4c4c4]">
          <Glyph box="0 0 14 12" size="h-3 w-3.5">
            <path d="M5.500 1.500H14M5.500 6H14M5.500 10.500H14" strokeWidth="1" />
            <path d="M.500 2l1 1L4 .500M.500 6.500l1 1L4 5M.500 11l1 1L4 9.500" strokeWidth=".600" />
          </Glyph>
        </button>
        <button aria-label="Clear filter" className="mr-1 text-[#b4b4b4]">
          <Glyph box="0 0 13 13" size="size-[13px]">
            <path d="M1 1h9L6.500 5.500V11L4.500 9V5.500z" fill="currentColor" />
            <path d="m7.500 7.500 4.500 5M12 7.500l-4.500 5" strokeWidth="1.600" />
          </Glyph>
        </button>
      </div>
      <div className="mt-[3px] flex flex-col gap-[3px] pr-1 pl-[3px]">
        {items.map((item) => (
          <button
            key={item}
            className="h-5 rounded-sm border border-[#9a9a9a] bg-[#92cbe8] pl-1.5 text-left text-[#0e1c26]"
          >
            {item}
          </button>
        ))}
      </div>
    </section>
  );
}

const chartBox = "absolute border border-[#e3e3e3] bg-white font-[Roboto,sans-serif]";

function SubCategoryChart() {
  return (
    <svg className={`${chartBox} top-[408px] left-[8px] h-[215px] w-[314px]`} fill="#1f3b5e">
      <text x="155" y="20" textAnchor="middle" className="text-[13px] font-bold">
        SubCategory Sales
      </text>
      {[...subCategories].reverse().map(([name, n], i) => {
        const y = 42.5 + i * 9.7;
        const w = (n / 291190) * 201;
        return (
          <g key={name}>
            {i % 2 === 0 && (
              <text x="50" y={y + 2.5} textAnchor="end" className="text-[8px] font-bold">
                {name}
              </text>
            )}
            <rect x="59.500" y={y - 2} width={w} height="4.500" />
            <text x={65 + w} y={y + 4} className="text-[9px]">
              {fmt(n)}
            </text>
          </g>
        );
      })}
    </svg>
  );
}

function RegionChart() {
  return (
    <svg className={`${chartBox} top-[653px] left-[13px] h-[144px] w-[400px]`} fill="#1f3b5e">
      <text x="198" y="23" textAnchor="middle" className="text-[15px] font-bold">
        Region Sales
      </text>
      {["West", "South", "East", "Central"].map((name, i) => {
        const n = regions.find((r) => r[0] === name)![1];
        const w = (n / 744294) * 319.5;
        const y = 46 + i * 22.6;
        return (
          <g key={name}>
            <text x="35" y={y + 9} textAnchor="end" className="text-[8px] font-bold">
              {name}
            </text>
            <rect x="43.500" y={y} width={w} height="11.500" />
            <text x={37 + w} y={y + 9} textAnchor="end" fill="#1b3149" className="text-[8px]">
              {fmt(n)}
            </text>
          </g>
        );
      })}
    </svg>
  );
}

function DelayedChart() {
  return (
    <svg className={`${chartBox} top-[848px] left-[20px] h-[160px] w-[320px]`} fill="#1f3b5e">
      <text x="139" y="21" textAnchor="middle" className="text-[15px] font-bold">
        Delayed Orders
      </text>
      <path d="M88 43l59 6M88 50h49M43 60V27h45v15M88 50v10" fill="none" stroke="#d0d0d0" />
      <text x="65" y="38" textAnchor="middle" className="text-[9px] font-bold">
        Same Day
      </text>
      <text x="65" y="49" textAnchor="middle" className="text-[9px] font-bold">
        4%
      </text>
      <circle cx="158" cy="99" r="51" fill="#26546e" />
      <path d="M158 99V48a51 51 0 0 0-12.700 1.600z" fill="#e0693f" />
    </svg>
  );
}

function DateChart() {
  const sales = years.flatMap((y) => y.sales);
  const step = 6.79;
  const points = sales.map((n, i) => `${46 + (i + 0.5) * step},${109.5 - (n * 71.5) / 140000}`).join(" ");
  const ticks = [0, 20000, 40000, 60000, 80000, 100000, 120000, 140000];
  return (
    <svg className={`${chartBox} top-[683px] left-[889px] h-[156px] w-[386px]`} fill="#1f3b5e">
      <text x="192" y="20" textAnchor="middle" className="text-[13px] font-bold">
        Date Sales
      </text>
      {ticks.map((t, i) => (
        <text key={t} x="37" y={112 - i * 10.2} textAnchor="end" className="text-[8px] font-bold">
          {fmt(t)}
        </text>
      ))}
      <path d="M46 110h326M46.500 110v40M127.500 110v40M209.500 110v40M291.500 110v40M372.500 110v40" stroke="#dadada" />
      <polyline points={points} fill="none" stroke="#8f8f8f" strokeOpacity="0.450" strokeWidth="2.500" transform="translate(2 2)" />
      <polyline points={points} fill="none" stroke="#27617f" strokeWidth="1.900" strokeLinejoin="round" />
      {sales.map((_, i) => {
        if (i % 2) return null;
        const x = 49 + (i + 0.5) * step;
        return (
          <text key={i} textAnchor="end" transform={`translate(${x} 115) rotate(-90)`} className="text-[8px] font-bold">
            {months[i % 12]}
          </text>
        );
      })}
      {years.map(({ year }, i) => (
        <text key={year} x={86.5 + i * 81.5} y="146" textAnchor="middle" className="text-[8px] font-bold">
          {year}
        </text>
      ))}
    </svg>
  );
}

function Sheet() {
  return (
    <div className="flex min-h-0 flex-1 bg-[#2b2b2b]">
      <div className="flex min-w-0 flex-1 flex-col">
        <div className="relative min-h-0 flex-1 overflow-hidden bg-white font-[Roboto,sans-serif]">
          <Grid />
          <div className="absolute top-[22px] right-0 bottom-0 left-[22px] overflow-hidden">
            <SubCategoryChart />
            <RegionChart />
            <DelayedChart />
            <DateChart />
            <Slicer title="Segment" items={["Consumer", "Corporate", "Home Office"]} place="left-[1121px] -top-px h-[225px] w-[162px]" />
            <Slicer title="Region" items={["Central", "East", "South", "West"]} place="left-[1117px] top-[246px] h-[225px] w-[163px]" />
            <Slicer title="Category" items={["Furniture", "Office Supplies", "Technology"]} place="left-[1320px] top-[11px] h-[113px] w-[167px]" />
            <Slicer title="Ship Mode" items={["First Class", "Same Day", "Second Class", "Standard Class"]} place="left-[1325px] top-[136px] h-[225px] w-[168px]" />
          </div>
        </div>
        <div className="flex h-[18px] shrink-0 items-center border-r-4 border-[#eeeeee] pr-11 pl-[3px]">
          <div className="h-2.5 flex-1 rounded-full bg-[#6a6a6a]" />
        </div>
      </div>
      <div className="flex w-[17px] shrink-0 justify-center border-t-4 border-[#e6e6e6] pt-0.5 pb-3">
        <div className="w-[11px] rounded-full bg-[#6a6a6a]" />
      </div>
    </div>
  );
}

/* ---------- bottom bars ---------- */

function SheetTabs() {
  return (
    <div className="flex h-[30px] shrink-0 items-start border-t border-b border-t-[#4a4a4a] border-b-black bg-[#333333] text-[15px]">
      <button aria-label="Previous sheet" className="mt-2 ml-[17px]">
        <svg viewBox="0 0 9 12" className="h-3 w-[9px] fill-[#6a6a6a]">
          <path d="M9 0v12L0 6z" />
        </svg>
      </button>
      <button aria-label="Next sheet" className="mt-2 ml-[17px]">
        <svg viewBox="0 0 9 12" className="h-3 w-[9px] fill-[#6a6a6a]">
          <path d="M0 0v12l9-6z" />
        </svg>
      </button>
      <button className="ml-[17px] h-[25px] w-[90px] rounded-b-xs bg-white pt-px font-semibold text-[#3b8255]">Rebort</button>
      <button className="h-7 w-[119px] border-r border-[#5a5a5a] bg-[#282828] pb-0.5 text-sm text-[#8a8a8a]">Dashboard1</button>
      <button aria-label="New sheet" className="flex h-7 w-[43px] items-center justify-center border-r border-[#5a5a5a] text-[#b5b5b5]">
        <svg viewBox="0 0 12 12" className="size-3" stroke="currentColor" strokeWidth="2">
          <path d="M6 0v12M0 6h12" />
        </svg>
      </button>
    </div>
  );
}

function StatusBar() {
  const [zoom, setZoom] = useState(45);
  return (
    <div className="flex h-[31px] shrink-0 items-center bg-[#262626] text-sm text-[#dadada]">
      <span className="ml-7">Ready</span>
      <button className="ml-[23px] flex items-center gap-[5px]">
        <Glyph box="0 0 18 20" size="h-5 w-[18px]">
          <circle cx="9" cy="2.800" r="2" strokeWidth="1.500" />
          <path d="M1.500 3.500C1 5 3 6 6 7v4l-2 7 3 .500 1.500-4M16.500 3.500C17 5 15 6 12 7v2" strokeWidth="1.500" />
          <circle cx="12.500" cy="14.500" r="5" fill="#fff" stroke="none" />
          <path d="M12.500 11.500v3.500M12.500 16.200v1.300" stroke="#262626" strokeWidth="1.500" />
        </Glyph>
        Accessibility: Investigate
      </button>
      <div className="ml-auto flex items-center pr-8">
        <button aria-label="Normal view" className="flex h-[26px] w-9 items-center justify-center rounded-sm bg-[#666666]">
          <svg viewBox="0 0 17 17" className="size-[17px] fill-white">
            <path d="M3 0h2v5H0V3a3 3 0 0 1 3-3M6 0h5v5H6zM12 0h2a3 3 0 0 1 3 3v2h-5zM0 6h5v5H0zM6 6h5v5H6zM12 6h5v5h-5zM0 12h5v5H3a3 3 0 0 1-3-3zM6 12h5v5H6zM12 12h5v2a3 3 0 0 1-3 3h-2z" />
          </svg>
        </button>
        <button aria-label="Page layout view" className="ml-4">
          <Glyph box="0 0 16 18" size="h-[18px] w-4">
            <path d="M3 1h6.500L14.500 6v9.500a1.500 1.500 0 0 1-1.500 1.500H3a1.500 1.500 0 0 1-1.500-1.500v-13A1.500 1.500 0 0 1 3 1ZM9.500 1v5h5" strokeWidth="1.500" />
            <path d="M4.500 9h7v5.500h-7zM4.500 11.700h7M7 9v5.500" />
          </Glyph>
        </button>
        <button aria-label="Page break view" className="ml-6">
          <Glyph box="0 0 18 18" size="size-[18px]">
            <path d="M2.500 0v6h13V0M2.500 18v-5h13v5" strokeWidth="1.500" />
            <path d="M0 9.500h18" strokeDasharray="1.500 1" />
          </Glyph>
        </button>
        <button aria-label="Zoom out" className="ml-[18px] text-[#b0b0b0]">
          <svg viewBox="0 0 10 10" className="size-2.5" stroke="currentColor" strokeWidth="1.800">
            <path d="M0 5h10" />
          </svg>
        </button>
        <input
          aria-label="Zoom"
          type="range"
          min="0"
          max="100"
          value={zoom}
          onChange={(e) => setZoom(Number(e.target.value))}
          className="ml-2 h-1 w-[114px] appearance-none rounded-full bg-[#636363] [&::-webkit-slider-thumb]:size-[18px] [&::-webkit-slider-thumb]:appearance-none [&::-webkit-slider-thumb]:rounded-full [&::-webkit-slider-thumb]:bg-[#a2a2a2]"
        />
        <button aria-label="Zoom in" className="ml-2 text-[#d0d0d0]">
          <svg viewBox="0 0 10 10" className="size-2.5" stroke="currentColor" strokeWidth="1.500">
            <path d="M0 5h10M5 0v10" />
          </svg>
        </button>
        <span className="ml-[26px] text-[13px]">91%</span>
      </div>
    </div>
  );
}

function Watermark() {
  return (
    <div className="pointer-events-none absolute bottom-0 left-1/2 flex -translate-x-1/2 flex-col items-center text-[#dadada]/85">
      <span lang="ar" dir="rtl" className="font-['DejaVu_Sans',sans-serif] text-[72px] leading-[84px] font-bold">
        نفذلي
      </span>
      <span className="font-[Roboto,sans-serif] text-[36px] leading-[42px] font-medium">nafezly.com</span>
    </div>
  );
}

export default function App() {
  return (
    <div className="relative flex h-screen flex-col overflow-hidden bg-[#282828] font-[Inter,sans-serif]">
      <TitleBar />
      <RibbonTabs />
      <Ribbon />
      <FormulaBar />
      <div className="h-1 shrink-0 border-t-2 border-[#e2e2e2] bg-[#151515]" />
      <Sheet />
      <SheetTabs />
      <StatusBar />
      <Watermark />
    </div>
  );
}
